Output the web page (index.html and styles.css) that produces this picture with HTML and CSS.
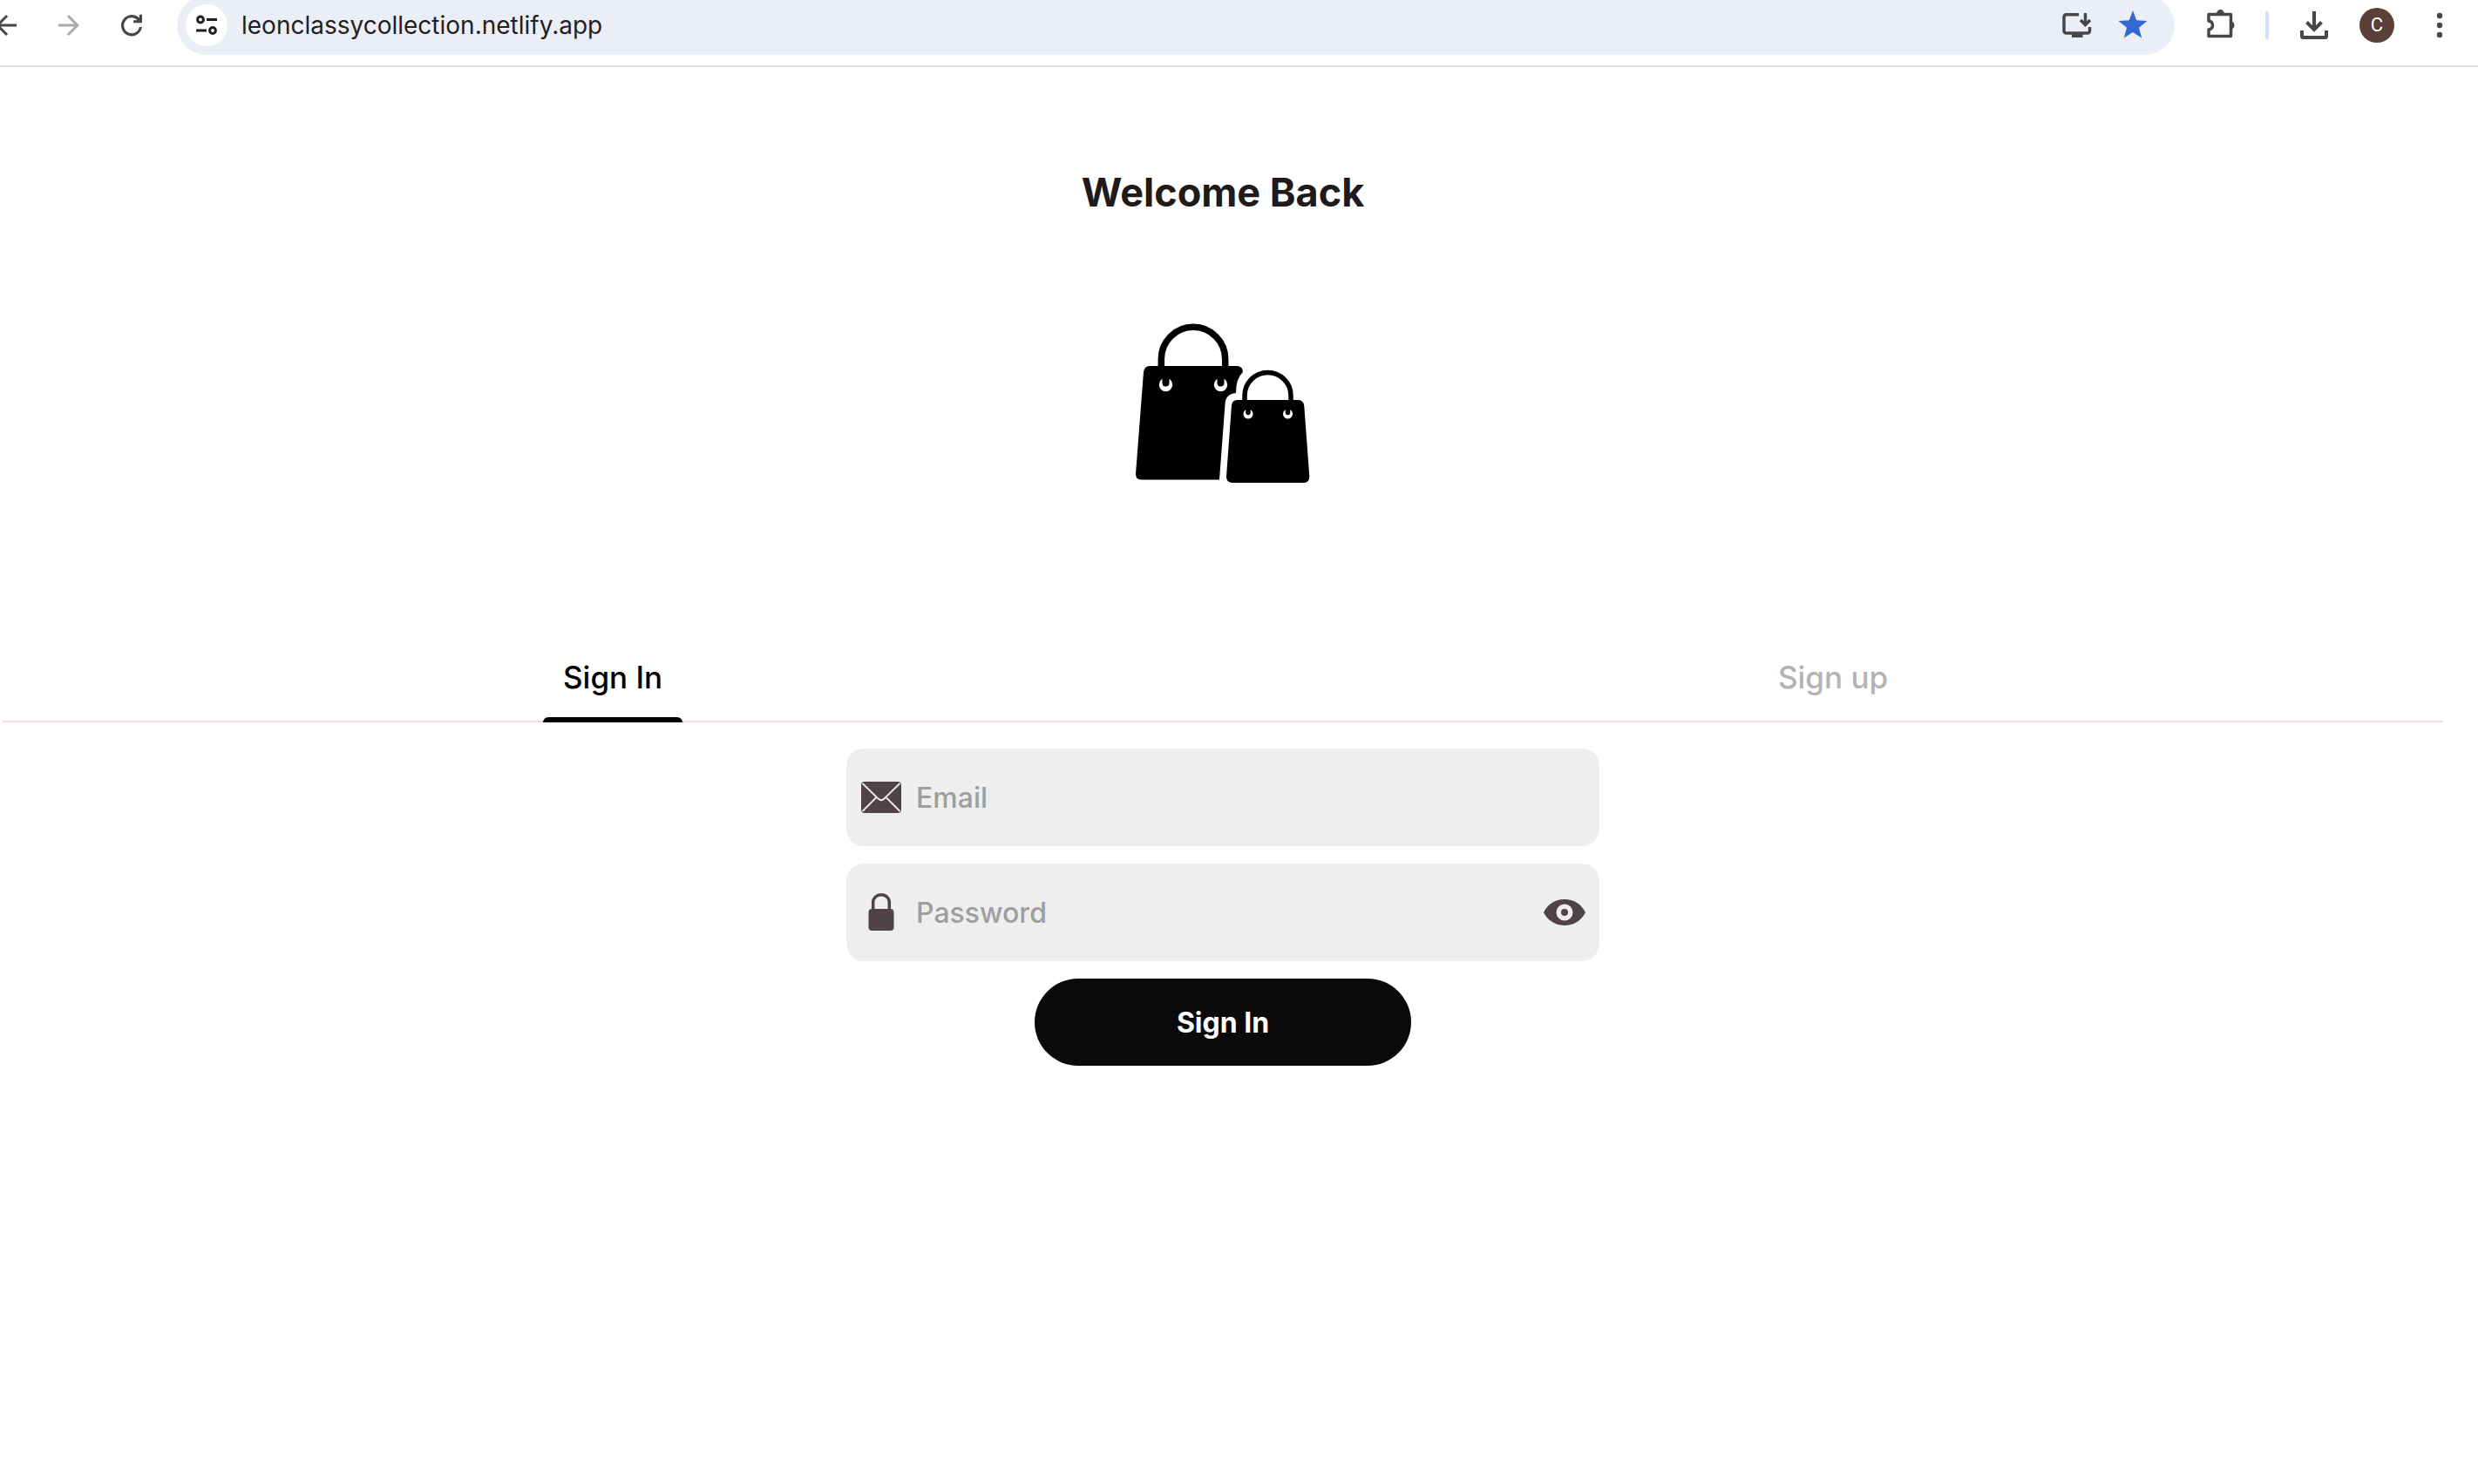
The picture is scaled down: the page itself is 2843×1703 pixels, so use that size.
FILE: index.html
```html
<!DOCTYPE html>
<html lang="en">
<head>
<meta charset="utf-8">
<title>Leon Classy Collection</title>
<meta name="viewport" content="width=device-width, initial-scale=1">
<link rel="stylesheet" href="styles.css">
</head>
<body>
<header class="toolbar">
  <nav class="history" aria-label="History">
    <button class="tool" aria-label="Back"><svg class="glyph" viewBox="0 0 24 24"><path d="M20 11H7.830l5.590-5.590L12 4l-8 8 8 8 1.410-1.410L7.830 13H20z"/></svg></button>
    <button class="tool tool-off" aria-label="Forward"><svg class="glyph" viewBox="0 0 24 24"><path d="M12 4l-1.410 1.410L16.170 11H4v2h12.170l-5.580 5.590L12 20l8-8z"/></svg></button>
    <button class="tool" aria-label="Reload"><svg class="glyph" viewBox="0 0 24 24"><path d="M12 20.300A8.150 8.150 0 1 1 17.900 6.400V3.800H20V10.200H13.400V8.100H16.400A5.950 5.950 0 1 0 17.900 13.300H20A8.150 8.150 0 0 1 12 20.300z"/></svg></button>
  </nav>
  <div class="address">
    <button class="site-info" aria-label="Site information"><svg class="glyph-small" viewBox="0 0 28 28" fill="none" stroke="currentColor" stroke-width="3"><circle cx="7" cy="7.500" r="3.400"/><path d="M14 7.500h12M2 20h12"/><circle cx="21" cy="20" r="3.400"/></svg></button>
    <input class="url" type="text" aria-label="Address" value="leonclassycollection.netlify.app">
    <button class="tool" aria-label="Install app"><svg class="icon-full" viewBox="0 0 48 48" fill="none" stroke="currentColor" stroke-width="3.500"><path d="M26 11.700H11.500a2.500 2.500 0 0 0-2.500 2.500V30.500a2.500 2.500 0 0 0 2.500 2.500H36a2.500 2.500 0 0 0 2.500-2.500V26"/><path d="M33.500 10v13M28 18l5.500 5.500 5.500-5.500"/><path d="M18 35.500h12.500" stroke-width="5"/></svg></button>
    <button class="tool star" aria-label="Bookmark"><svg class="icon-full" viewBox="0 0 48 48"><path d="M24 7l4.200 11.200L40.500 19l-9.500 7.700L34.200 38.500 24 31.900 13.800 38.500 17 26.700 7.500 19l12.300-.8z"/></svg></button>
  </div>
  <button class="tool" aria-label="Extensions"><svg class="icon-full" viewBox="0 0 48 48"><path fill="none" stroke="currentColor" stroke-width="3.500" stroke-linejoin="round" d="M9 11.500h25.500v25H9v-7.500c6-1 6-9 0-10z"/><path d="M18 11a4.500 5 0 0 1 9 0zM35.500 19.500a4.500 4.800 0 0 1 0 9z"/></svg></button>
  <span class="divider"></span>
  <div class="actions">
    <button class="tool" aria-label="Downloads"><svg class="icon-full" viewBox="0 0 48 48" fill="none" stroke="currentColor" stroke-width="4"><path d="M24 8v20M15.500 20.500l8.500 8.500 8.500-8.500M10 30v6.500a1.500 1.500 0 0 0 1.500 1.500h25a1.500 1.500 0 0 0 1.500-1.500V30"/></svg></button>
    <button class="tool" aria-label="Profile"><span class="avatar">C</span></button>
    <button class="tool" aria-label="Menu"><svg class="icon-full" viewBox="0 0 48 48"><circle cx="24" cy="13" r="3.200"/><circle cx="24" cy="24" r="3.200"/><circle cx="24" cy="35" r="3.200"/></svg></button>
  </div>
</header>

<main class="page">
  <h1 class="title">Welcome Back</h1>
  <svg class="bags" viewBox="3 0 240 220" role="img" aria-label="Two shopping bags">
    <path d="M39 70H140Q146 71 146 77Q138 84 138 101Q126 102 125.500 114L119 200.500H29Q23 200 23 194L32 77Q33 70 39 70z"/>
    <path d="M139 109H210Q216 110 216.300 116L222.300 197Q222.300 203.500 216 204H133Q127 203 127 197L133 115Q134 109 139 109z"/>
    <g fill="none" stroke="#000">
      <path stroke-width="7.500" d="M52.300 72V62a36.700 36.700 0 0 1 73.400 0V72"/>
      <path stroke-width="5.500" d="M148 111v-7a26.500 26.500 0 0 1 53 0v7"/>
    </g>
    <g fill="#fff"><circle cx="57.500" cy="91.500" r="7.700"/><circle cx="120.500" cy="91.500" r="7.700"/><circle cx="152" cy="125" r="5.500"/><circle cx="197.500" cy="125" r="5.500"/></g>
    <g stroke="#000" stroke-linecap="round"><path stroke-width="8" d="M57.500 83v6.500M120.500 83v6.500"/><path stroke-width="5.500" d="M152 119v4.500M197.500 119v4.500"/></g>
  </svg>

  <div class="tabs" role="tablist">
    <button class="tab tab-active" role="tab" aria-selected="true"><span class="tab-label">Sign In</span></button>
    <button class="tab" role="tab" aria-selected="false"><span class="tab-label">Sign up</span></button>
  </div>

  <form class="form">
    <label class="field">
      <svg class="icon" viewBox="0 0 48 48" aria-hidden="true"><rect x="1" y="6" width="46" height="36" rx="4"/><path fill="none" stroke="#eee" stroke-width="1.800" d="M2.500 8L20.500 25.500Q24 29 27.500 25.500L45.500 8M2.500 40L18 24.500M45.500 40L30 24.500"/></svg>
      <input class="entry" type="email" placeholder="Email" aria-label="Email">
    </label>
    <div class="field">
      <svg class="icon" viewBox="0 0 48 48" aria-hidden="true"><rect x="9.500" y="20" width="29" height="25" rx="4"/><path fill="none" stroke="currentColor" stroke-width="3.500" d="M14.700 21v-8.500a9.300 8.800 0 0 1 18.600 0V21"/></svg>
      <input class="entry" type="password" placeholder="Password" aria-label="Password">
      <button class="reveal" type="button" aria-label="Show password"><svg class="icon" viewBox="0 0 48 48"><path fill-rule="evenodd" d="M0 24C5 14 14 9 24 9s19 5 24 15c-5 10-14 15-24 15S5 34 0 24zM24 14.500a9.500 9.500 0 1 0 0 19a9.500 9.500 0 1 0 0-19z"/><circle cx="24" cy="24" r="4"/></svg></button>
    </div>
    <button class="submit" type="button">Sign In</button>
  </form>
</main>
</body>
</html>
```
FILE: styles.css
```css
* {
  box-sizing: border-box;
}

body {
  margin: 0;
  background: #fff;
  font-family: Inter, "Liberation Sans", sans-serif;
  overflow-x: hidden;
}

button,
input {
  margin: 0;
  padding: 0;
  border: 0;
  background: none;
  font: inherit;
  color: inherit;
  outline: none;
}

svg {
  display: block;
  flex: none;
  fill: currentColor;
}

svg[fill="none"] {
  fill: none;
}

/* Browser toolbar */
.toolbar {
  display: flex;
  align-items: center;
  margin-top: -5px;
  padding: 0 20px 12px 0;
  border-bottom: 2px solid #e1e1e1;
  color: #474747;
}

.history,
.actions {
  display: flex;
  gap: 24px;
}

.history {
  margin-left: -17px;
}

.tool {
  display: flex;
  flex: none;
  align-items: center;
  justify-content: center;
  width: 48px;
  height: 48px;
}

.tool-off {
  color: #ababab;
}

.star {
  color: #3367d1;
}

.glyph {
  width: 36px;
  height: 36px;
}

.glyph-small {
  width: 28px;
  height: 28px;
}

.icon-full {
  width: 48px;
  height: 48px;
}

.address {
  display: flex;
  flex: 1;
  align-items: center;
  gap: 16px;
  height: 68px;
  margin: 0 30px 0 28px;
  padding: 0 24px 0 10px;
  border-radius: 34px;
  background: #ebeef7;
}

.site-info {
  display: flex;
  flex: none;
  align-items: center;
  justify-content: center;
  width: 48px;
  height: 48px;
  border-radius: 50%;
  background: #fff;
  color: #1f1f1f;
}

.url {
  flex: 1;
  min-width: 0;
  color: #1f1f1f;
  font-size: 28px;
}

.divider {
  width: 4px;
  height: 32px;
  margin: 0 28px 0 26px;
  border-radius: 2px;
  background: #d3e0fc;
}

.avatar {
  width: 40px;
  border-radius: 50%;
  background: #5a4037;
  color: #fff;
  font-family: Roboto, sans-serif;
  font-size: 22px;
  line-height: 40px;
  text-align: center;
}

/* Sign-in page */
.page {
  display: flex;
  flex-direction: column;
  align-items: center;
  margin: 0 40px 0 3px;
  padding-top: 116px;
}

.title {
  margin: 0;
  color: #201a1b;
  font-size: 45px;
  font-weight: 700;
  line-height: 56px;
}

.bags {
  width: 240px;
  height: 220px;
  margin-top: 101px;
  color: #000;
}

.tabs {
  display: flex;
  align-self: stretch;
  height: 96px;
  margin-top: 163px;
  border-bottom: 2px solid #f0dfe3;
}

.tab {
  display: flex;
  flex: 1;
  justify-content: center;
  height: 96px;
  color: #b3b3b3;
  font-size: 35px;
  font-weight: 500;
}

.tab-label {
  display: flex;
  flex-direction: column;
  width: 160px;
  line-height: 88px;
}

.tab-active {
  color: #000;
}

.tab-active .tab-label::after {
  content: "";
  height: 6px;
  margin-top: 2px;
  border-radius: 6px 6px 0 0;
  background: #000;
}

.form {
  display: flex;
  flex-direction: column;
  align-items: center;
  gap: 20px;
  width: 864px;
  max-width: 100%;
  margin-top: 30px;
}

.field {
  display: flex;
  align-items: center;
  gap: 16px;
  width: 100%;
  height: 112px;
  padding: 0 16px;
  border-radius: 20px;
  background: #eee;
  color: #4f4346;
}

.icon {
  width: 48px;
  height: 48px;
}

.entry {
  flex: 1;
  min-width: 0;
  font-size: 32px;
  font-weight: 500;
}

.entry::placeholder {
  color: #9e9e9e;
  opacity: 1;
}

.submit {
  width: 50%;
  height: 100px;
  border-radius: 50px;
  background: #0a0a0a;
  color: #fff;
  font-size: 32px;
  font-weight: 700;
}
```
